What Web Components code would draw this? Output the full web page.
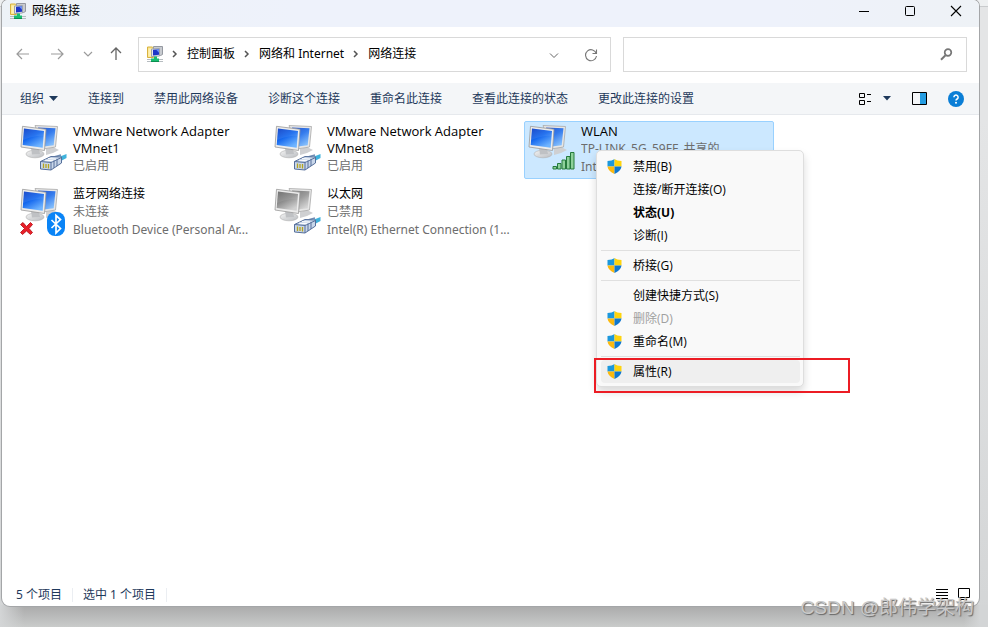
<!DOCTYPE html>
<html lang="zh-CN">
<head>
<meta charset="utf-8">
<title>网络连接</title>
<style>
html,body{height:100%}
body{margin:0;font:12px/18px "Noto Sans","Noto Sans CJK SC",sans-serif;color:#000;--ui:"Open Sans","Noto Sans CJK SC",sans-serif}
</style>
</head>
<body>
<desktop-area>
  <app-window>
    <title-bar slot="title">网络连接</title-bar>
    <nav-bar slot="nav">
      <crumb-link>控制面板</crumb-link>
      <crumb-link>网络和 Internet</crumb-link>
      <crumb-link>网络连接</crumb-link>
    </nav-bar>
    <command-bar slot="commands">
      <command-button menu>组织</command-button>
      <command-button>连接到</command-button>
      <command-button>禁用此网络设备</command-button>
      <command-button>诊断这个连接</command-button>
      <command-button>重命名此连接</command-button>
      <command-button>查看此连接的状态</command-button>
      <command-button>更改此连接的设置</command-button>
    </command-bar>
    <connection-grid>
      <connection-tile kind="cable" latin>VMware Network Adapter VMnet1<span slot="state">已启用</span></connection-tile>
      <connection-tile kind="cable" latin>VMware Network Adapter VMnet8<span slot="state">已启用</span></connection-tile>
      <connection-tile kind="wifi" latin selected>WLAN<span slot="state">TP-LINK_5G_59FF_共享的</span><span slot="device">Intel(R)</span></connection-tile>
      <connection-tile kind="bluetooth">蓝牙网络连接<span slot="state">未连接</span><span slot="device">Bluetooth Device (Personal Ar...</span></connection-tile>
      <connection-tile kind="cable" off>以太网<span slot="state">已禁用</span><span slot="device">Intel(R) Ethernet Connection (1...</span></connection-tile>
      <context-menu slot="menu">
        <menu-item shield>禁用(B)</menu-item>
        <menu-item>连接/断开连接(O)</menu-item>
        <menu-item strong>状态(U)</menu-item>
        <menu-item>诊断(I)</menu-item>
        <menu-line></menu-line>
        <menu-item shield>桥接(G)</menu-item>
        <menu-line></menu-line>
        <menu-item>创建快捷方式(S)</menu-item>
        <menu-item shield disabled>删除(D)</menu-item>
        <menu-item shield>重命名(M)</menu-item>
        <menu-line></menu-line>
        <menu-item shield current>属性(R)</menu-item>
      </context-menu>
      <red-frame slot="menu"></red-frame>
    </connection-grid>
    <status-bar slot="status"><span>5 个项目</span><span>选中 1 个项目</span></status-bar>
  </app-window>
  <water-mark slot="mark">CSDN @郎伟学架构</water-mark>
</desktop-area>
<script>
const define=(name,markup,setup)=>{
  const t=document.createElement('template');
  t.innerHTML=markup;
  customElements.define(name,class extends HTMLElement{
    constructor(){super();this.attachShadow({mode:'open'}).append(t.content.cloneNode(true));}
    connectedCallback(){if(setup)setup(this,this.shadowRoot);}
  });
};
const reset='*{box-sizing:border-box}button{font:inherit;color:inherit;background:none;border:0;padding:0;margin:0}svg{display:block;flex:none}';

/* Folder of network connections, 16x16 */
const folderIcon=`<svg width="16" height="16" viewBox="0 0 16 16" aria-hidden="true">
<path d="M.5 1h5l1 1v9.500h-6z" fill="#f9e28b" stroke="#d8b23f"/><path d="M1.500 2.500h3v8h-3z" fill="#fff0ae"/>
<path d="M6.500.5h9v8l-2 1h-7z" fill="#c8cbd0" stroke="#9599a1"/>
<path d="M4.500 3l8-.5v7.500l-8 .5z" fill="#e5e8ed" stroke="#9da2ab"/><path d="M6 3.800l6-.5v5.400l-6 .8z" fill="#1e36c8"/><path d="M9 3.500l3-.3v3.500z" fill="#6b93f5"/>
<path d="M0 13.500h16M0 15.500h16" stroke="#b6bcc0"/><path d="M7 10.500h3v2h2v3H4v-3h3z" fill="#18bd70"/><path d="M4 15.500h8" stroke="#0b8f50"/></svg>`;

define('desktop-area',`<style>${reset}
:host{display:flex;flex-direction:column;position:relative;min-height:100%;padding:0 9px 21px 2px;box-sizing:border-box;overflow:hidden;
background:linear-gradient(#a9a9a9,#c9cbca) bottom/100% 22px no-repeat,linear-gradient(#eef0f1 0 6px,#c9cbcd 6px 7px,#e4e5e6 7px 120px,#d3d5d6 100%)}
.edge{position:absolute;left:0;bottom:0;width:24px;height:22px;background:linear-gradient(90deg,#d3d5d6,#d3d5d600)}
.edge.r{left:auto;right:0;background:linear-gradient(270deg,#d3d5d6 8px,#d3d5d600)}
::slotted(app-window){flex:1}
</style><div class="edge"></div><div class="edge r"></div><slot></slot><slot name="mark"></slot>`);

define('app-window',`<style>
:host{display:flex;flex-direction:column;position:relative;background:#fff;border-radius:6px 6px 8px 8px;box-shadow:0 0 0 1px #a4a6a8}
main{flex:1;display:flex;flex-direction:column}
</style><slot name="title"></slot><slot name="nav"></slot><slot name="commands"></slot><main><slot></slot></main><slot name="status"></slot>`);

define('title-bar',`<style>${reset}
:host{display:flex;height:27px;padding-left:8px;background:linear-gradient(90deg,#edf2f7,#eef2fb 30%,#eef2fb 80%,#eef2f6);border-radius:6px 6px 0 0}
.name{display:flex;gap:6px;flex:1;padding-top:2px}
.name svg{margin-top:1px}
.name span{line-height:18px}
button{width:46px;height:22px;display:grid;place-items:center}
</style><div class="name">${folderIcon}<span><slot></slot></span></div>
<button aria-label="最小化"><svg width="12" height="12" viewBox="0 0 12 12"><path d="M1 6.500h10" stroke="#000"/></svg></button>
<button aria-label="最大化"><svg width="12" height="12" viewBox="0 0 12 12"><rect x="1.500" y="1.500" width="9" height="9" rx="1" fill="none" stroke="#000"/></svg></button>
<button aria-label="关闭"><svg width="12" height="12" viewBox="0 0 12 12"><path d="M1 1l10 10M11 1L1 11" stroke="#000" stroke-width="1.100"/></svg></button>`);

define('nav-bar',`<style>${reset}
:host{display:flex;align-items:center;box-sizing:border-box;height:56px;padding:0 12px 2px 9px}
button{display:grid;place-items:center;height:24px}
.go{width:24px}.list{width:20px}
.nav{display:flex;flex:none;gap:10px;margin-right:10px}
.nav .list{margin:0 -4px 0 -1px}
.box{display:flex;align-items:center;height:35px;border:1px solid #d9d9d9;background:#fff}
.address{flex:474 1 0;padding:0 7px 0 8px}
.crumbs{display:flex;flex:1;align-items:center;white-space:nowrap}
.search{flex:342 1 0;margin-left:12px;padding-right:13px}
input{flex:1;min-width:0;height:31px;border:0;outline:0;background:none;font:inherit}
.address .list{margin-right:15px}
.address button svg{margin-top:2px}
</style>
<div class="nav">
<button class="go" aria-label="后退"><svg width="14" height="14" viewBox="0 0 14 14" fill="none" stroke="#9b9b9b" stroke-width="1.200"><path d="M1 7h12M6 2L1 7l5 5"/></svg></button>
<button class="go" aria-label="前进"><svg width="14" height="14" viewBox="0 0 14 14" fill="none" stroke="#9b9b9b" stroke-width="1.200"><path d="M1 7h12M8 2l5 5-5 5"/></svg></button>
<button class="list" aria-label="最近位置"><svg width="10" height="10" viewBox="0 0 10 10" fill="none" stroke="#9b9b9b" stroke-width="1.200"><path d="M1 3l4 4 4-4"/></svg></button>
<button class="go" aria-label="向上"><svg width="14" height="14" viewBox="0 0 14 14" fill="none" stroke="#666" stroke-width="1.300"><path d="M7 13V1M2 6l5-5 5 5"/></svg></button>
</div>
<div class="box address">${folderIcon}<div class="crumbs"><slot></slot></div>
<button class="list" aria-label="展开地址"><svg width="10" height="10" viewBox="0 0 10 10" fill="none" stroke="#666"><path d="M1 3.500l4 4 4-4"/></svg></button>
<button class="go" aria-label="刷新"><svg width="14" height="14" viewBox="0 0 14 14" fill="none" stroke="#777" stroke-width="1.100"><path d="M12.300 5.500A5.500 5.500 0 1 0 12.500 8M12.500 1.500v4h-4"/></svg></button></div>
<label class="box search"><input type="text" aria-label="搜索网络连接"><svg width="13" height="13" viewBox="0 0 13 13" fill="none" stroke="#777"><circle cx="8" cy="4.500" r="3.300" stroke-width="1.700"/><path d="M5.500 7.200L1 11.700" stroke-width="2"/></svg></label>`);

define('crumb-link',`<style>${reset}:host{display:flex;align-items:center}svg{margin:0 9px}a{color:#000;text-decoration:none}</style>
<svg width="6" height="8" viewBox="0 0 6 8" fill="none" stroke="#555" stroke-width="1.500"><path d="M1 1l3 3-3 3"/></svg><a href="#"><slot></slot></a>`);

define('command-bar',`<style>${reset}
:host{display:flex;align-items:center;box-sizing:border-box;height:32px;padding:0 15px 0 3px;background:#f4f6f8;border-bottom:1px solid #e6e9ed;color:#1e395b}
.left,.right{display:flex;align-items:center}
.left{flex:1}
.right{gap:21px}
.view{display:flex;align-items:center;gap:10px}
button{display:grid;place-items:center}
</style><div class="left"><slot></slot></div><div class="right">
<div class="view"><button aria-label="更改视图"><svg width="14" height="14" viewBox="0 0 14 14" fill="none" stroke="#000"><path d="M.5 1.500h5v4h-5zM.5 8.500h5v4h-5zM8 2.500h4M8 9.500h4"/></svg></button>
<button aria-label="更多选项"><svg width="8" height="5" viewBox="0 0 8 5"><path d="M0 0h8L4 4.500z" fill="#1e395b"/></svg></button></div>
<button aria-label="预览窗格"><svg width="15" height="13" viewBox="0 0 15 13"><path d="M8 1h6v11H8z" fill="#259de2"/><path d="M.5.5h14v12H.5z" fill="none" stroke="#000"/></svg></button>
<button aria-label="帮助"><svg width="16" height="16" viewBox="0 0 16 16"><circle cx="8" cy="8" r="8" fill="#0a7ed6"/><path d="M5.900 6.200a2.100 2.100 0 1 1 3.200 1.800c-.8.500-1.100.8-1.100 1.500" fill="none" stroke="#fff" stroke-width="1.500"/><circle cx="8" cy="11.700" r="1" fill="#fff"/></svg></button></div>`);

define('command-button',`<style>${reset}:host{display:block}button{display:flex;align-items:center;gap:5px;padding:0 15px;line-height:24px;white-space:nowrap}:host(:not([menu])) svg{display:none}</style>
<button><slot></slot><svg width="9" height="5" viewBox="0 0 9 5" aria-hidden="true"><path d="M0 0h9L4.500 5z" fill="#1e395b"/></svg></button>`);

define('connection-grid',`<style>
:host{display:block;position:relative;flex:1;padding:6px 14px}
.grid{display:grid;grid-template-columns:repeat(auto-fill,250px);gap:5px 4px}
</style><div class="grid"><slot></slot></div><slot name="menu"></slot>`);

const badges={
cable:`<path d="M36 35.500l11.500-4.500v4L40 39z" fill="#3fb2dc"/><path d="M33 34.500l9-2.500" stroke="#6f8bb3" stroke-width="1.500"/>
<path d="M21.500 38.500l10.500-5 10.500.5v6L32 47l-10.500-1z" fill="#c9d7ea" stroke="#566f9a"/><path d="M21.500 38.500l10.500 1 10.500-5M32 39.500V47" fill="none" stroke="#566f9a"/><path d="M24.500 40.500v4.500M27 41v4M29.500 41v4.500" stroke="#b5a41e" stroke-width="1.300"/><path d="M35 38v7M38 36.500v6.500" stroke="#566f9a"/><path d="M26 37.200l8 .5M29 35.600l8 .5" stroke="#fff"/>`,
wifi:`<g fill="#8ed19b" stroke="#257a3c"><path d="M26 43.500h3.500V46H26zM30.500 40.500h3.500V46h-3.500zM35 37h3.500v9H35zM39.500 33.500H43V46h-3.500zM43.500 29.500h3.500V46h-3.500z"/></g>`,
bluetooth:`<rect x="28" y="26" width="18" height="24" rx="8" fill="#0a84f6"/><path d="M32.500 34l9 8.500-4.500 4.500V29.500l4.500 4L32.500 42" fill="none" stroke="#fff" stroke-width="1.700"/>
<path d="M1.500 38.500l2.500-2 3.500 4 4-4 2 2-3.500 4 3.500 4-2 2-4-3.500-4 3.500-2-2 4-4z" fill="#e8202a" stroke="#b4090f" stroke-width=".8"/>`
};
let serial=0;
define('connection-tile',`<style>${reset}
:host{display:block;min-width:0;min-height:58px}
button{display:flex;align-items:flex-start;gap:6px;width:100%;min-height:58px;padding:0 2px;border:1px solid transparent;border-radius:2px;text-align:left}
:host([selected]) button{background:#cce8ff;border-color:#99d1ff}
svg{margin-top:1px;overflow:visible}
.text{min-width:0;flex:1;padding-right:4px}
.text .name{line-height:18px}
:host([latin]) .name{font:13px/17px var(--ui);padding-top:1px}
.sub{color:#6d6d6d;white-space:nowrap;overflow:hidden;text-overflow:ellipsis}
</style><button><svg width="48" height="48" viewBox="0 0 48 48" aria-hidden="true"></svg>
<div class="text"><div class="name"><slot></slot></div><div class="sub"><slot name="state"></slot></div><div class="sub"><slot name="device"></slot></div></div></button>`,(host,root)=>{
  const id='screen'+(serial++),off=host.hasAttribute('off');
  const c=off?['#666','#d0d0d0','#8d8d8d']:['#0a3cc4','#6fb4ff','#1568ee'];
  root.querySelector('svg').innerHTML=`<defs><linearGradient id="${id}" x1="0" y1="0" x2=".6" y2="1"><stop offset="0" stop-color="${c[0]}"/><stop offset=".5" stop-color="${c[2]}"/><stop offset="1" stop-color="${c[1]}"/></linearGradient>
<linearGradient id="${id}b" x1="0" y1="0" x2="1" y2="1"><stop offset="0" stop-color="#f4f4f4"/><stop offset="1" stop-color="#b9bcc0"/></linearGradient></defs>
<path d="M27 26l7-2 6 3-6 3-7 2z" fill="#cfd0d2"/>
<path d="M16 2.500l22.500 1L36.500 24 24 26z" fill="#e6e6e6" stroke="#a8a8a8" stroke-width=".8"/><path d="M19 4.500l17.500.8-1.800 17L25 23.500z" fill="url(#${id})" opacity=".85"/>
<ellipse cx="16" cy="31" rx="9" ry="3.800" fill="url(#${id}b)" stroke="#b0b0b0" stroke-width=".6"/><path d="M12 25l8 1 1 5-8 .5z" fill="#bfc1c4"/>
<path d="M3.500 3.300l23.500 3-1.500 21.200L2 24z" fill="#ececec" stroke="#999" stroke-width=".8"/><path d="M5 5.500l20 2.500-1.300 16.800L3.700 22z" fill="url(#${id})"/><path d="M5 5.500l20 2.500-.4 5C17 12 10 15 4.200 17z" fill="#fff" opacity=".08"/>`+badges[host.getAttribute('kind')];
});

define('context-menu',`<style>
:host{display:block;position:absolute;left:594px;top:35px;width:208px;box-sizing:border-box;padding:4px 3px 3px 4px;background:#f9f9f9;border:1px solid #dedede;border-radius:5px;box-shadow:0 5px 9px #00000026;font-family:var(--ui)}
</style><div role="menu"><slot></slot></div>`);
define('menu-line',`<style>:host{display:block;height:1px;margin:3px 0;background:#e0e0e0}</style>`);
define('menu-item',`<style>${reset}
:host{display:block}
button{display:flex;align-items:center;gap:11px;width:100%;height:23px;padding-left:6px;border-radius:4px;text-align:left}
.icon{width:15px;height:15px}
:host(:not([shield])) svg{display:none}
:host([strong]){font-weight:700}
:host([current]) button{background:#efefef}
:host([disabled]) button{color:#a0a0a0}
</style><button role="menuitem"><span class="icon"><svg width="15" height="15" viewBox="0 0 15 15" aria-hidden="true">
<path d="M7.500 0C6 1.300 3.500 2 .5 2v5.500h7z" fill="#1c98dc"/><path d="M7.500 0C9 1.300 11.500 2 14.500 2v5.500h-7z" fill="#fed40e"/><path d="M.5 7.500h7V15C3.500 13.200.8 10.800.5 7.500z" fill="#fcb90f"/><path d="M14.500 7.500h-7V15c4-1.800 6.700-4.200 7-7.500z" fill="#0f78d0"/></svg></span><span><slot></slot></span></button>`,(h,r)=>{r.querySelector('button').disabled=h.hasAttribute('disabled');});
define('red-frame',`<style>:host{display:block;position:absolute;left:592px;top:243px;width:256px;height:35px;box-sizing:border-box;border:2px solid #ec1c24;pointer-events:none}</style>`);

define('status-bar',`<style>${reset}
:host{display:flex;align-items:center;box-sizing:border-box;height:24px;padding:0 4px 0 4px;color:#1e395b}
.info{display:flex;flex:1;padding-top:1px}
::slotted(span){padding:0 10px;border-right:1px solid #ebeef2;line-height:14px}
button{display:grid;place-items:center;width:22px;height:18px}
</style><div class="info"><slot></slot></div>
<button aria-label="详细信息"><svg width="12" height="12" viewBox="0 0 12 12"><path d="M0 1.500h12M0 4.500h12M0 7.500h12M0 10.500h12" stroke="#000"/></svg></button>
<button aria-label="大图标"><svg width="12" height="12" viewBox="0 0 12 12"><path d="M.5.5h11v9H.5zM3 11.500h6" fill="none" stroke="#000"/></svg></button>`);

define('water-mark',`<style>:host{position:absolute;right:14px;bottom:6px;font:19px/26px "Liberation Sans","Noto Sans CJK SC",sans-serif;color:#c9c9c9;text-shadow:1px 1px 1px #666;white-space:nowrap}</style><slot></slot>`);
</script>
</body>
</html>
